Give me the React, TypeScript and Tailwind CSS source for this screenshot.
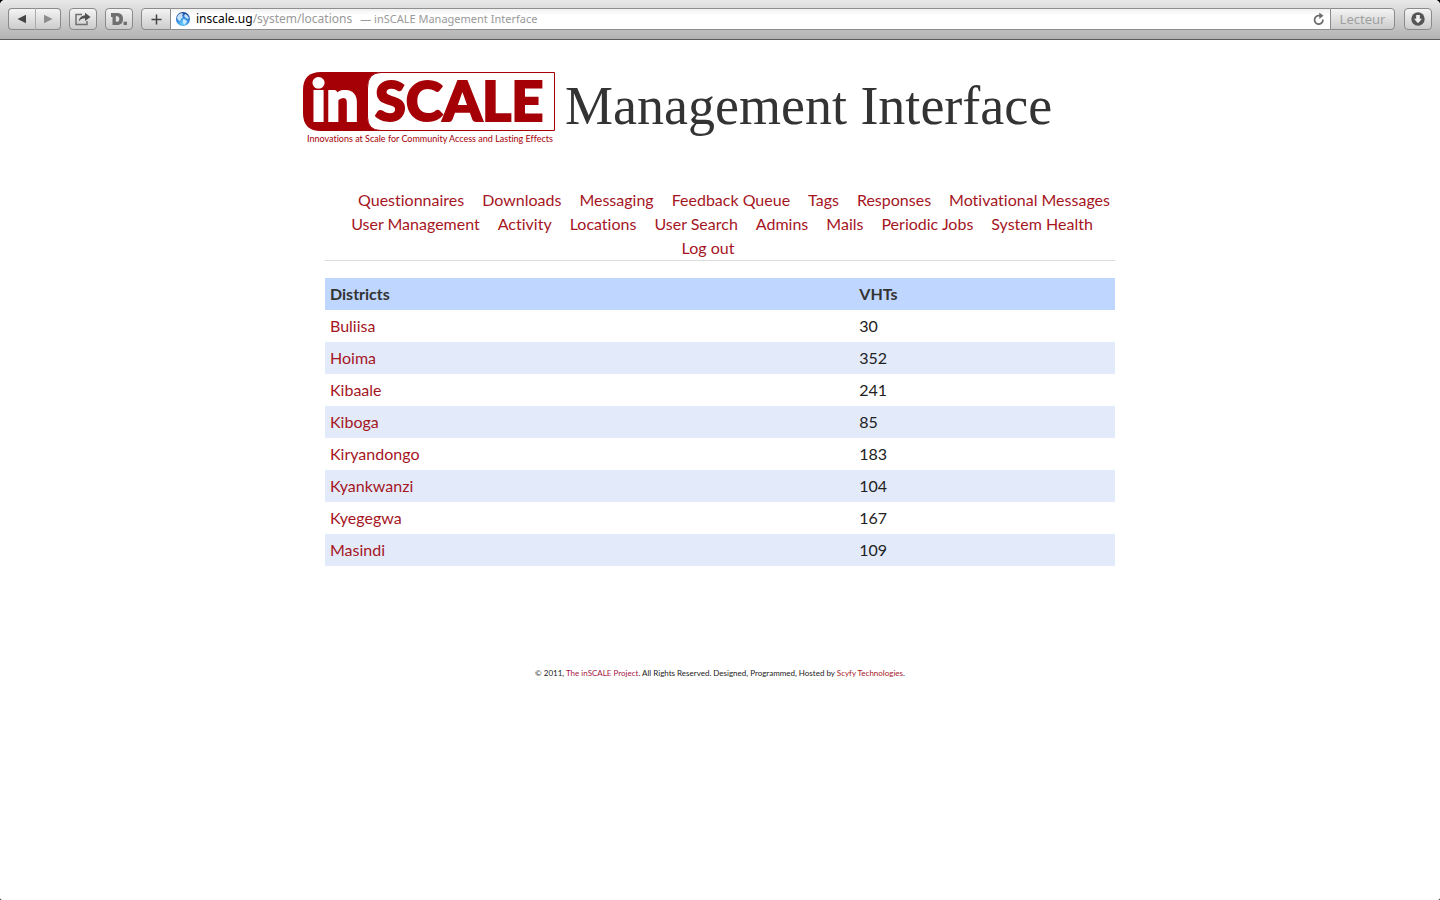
import React from "react";

const navRows = [
  { align: "pl-7", items: ["Questionnaires", "Downloads", "Messaging", "Feedback Queue", "Tags", "Responses", "Motivational Messages"] },
  { align: "pl-1", items: ["User Management", "Activity", "Locations", "User Search", "Admins", "Mails", "Periodic Jobs", "System Health"] },
  { align: "pr-6", items: ["Log out"] },
];

const districts = [
  { name: "Buliisa", vhts: 30 },
  { name: "Hoima", vhts: 352 },
  { name: "Kibaale", vhts: 241 },
  { name: "Kiboga", vhts: 85 },
  { name: "Kiryandongo", vhts: 183 },
  { name: "Kyankwanzi", vhts: 104 },
  { name: "Kyegegwa", vhts: 167 },
  { name: "Masindi", vhts: 109 },
];

const toolButton =
  "flex h-[22px] items-center justify-center border border-[#8a8a8a] bg-linear-to-b from-[#f4f4f4] to-[#cccccc]";

function Toolbar() {
  return (
    <div className="flex h-10 items-start border-b border-[#5c5c5c] bg-linear-to-b from-[#e9e9e9] to-[#b2b2b2] px-2 pt-2">
      <div className="mr-2 flex">
        <button aria-label="Back" className={`${toolButton} w-[27px] rounded-l-[4px] border-r-0`}>
          <svg width="10" height="10" viewBox="0 0 10 10"><path d="M9 .8v8.4L.5 5z" fill="#454545" /></svg>
        </button>
        <button aria-label="Forward" className={`${toolButton} w-[26px] rounded-r-[4px] border-l-[#aaaaaa]`}>
          <svg width="10" height="10" viewBox="0 0 10 10"><path d="M1 .8v8.4L9.500 5z" fill="#8c8c8c" /></svg>
        </button>
      </div>
      <button aria-label="Share" className={`${toolButton} mr-2 w-7 rounded-[4px]`}>
        <svg width="18" height="16" viewBox="0 0 18 16">
          <path d="M8 3.5H2v10h11V10" fill="none" stroke="#707070" strokeWidth="1.500" />
          <path d="M4.800 10.500C5 6.800 7.500 4.400 11 4.400V1.700l5.500 4.200-5.500 4V7.200C8.200 7.200 6.300 8.300 4.800 10.500z" fill="#505050" />
        </svg>
      </button>
      <button aria-label="Reading service" className={`${toolButton} mr-2 w-7 rounded-[4px]`}>
        <svg width="18" height="16" viewBox="0 0 18 16">
          <path fillRule="evenodd" d="M1 2h6c4 0 6 2.200 6 6s-2 6-6 6H2.500V6H1zM5.800 5.300v5.500H7c1.500 0 2.300-.9 2.300-2.800S8.500 5.300 7 5.300z" fill="#707070" />
          <rect x="13.500" y="10.700" width="3.500" height="3.300" fill="#707070" />
        </svg>
      </button>
      <button aria-label="Add bookmark" className={`${toolButton} w-[30px] rounded-l-[4px]`}>
        <svg width="11" height="11" viewBox="0 0 11 11"><path d="M5.500 .5v10M.5 5.500h10" stroke="#444444" strokeWidth="1.500" /></svg>
      </button>
      <div className="flex h-[22px] min-w-0 flex-1 items-center border-y border-[#8f8f8f] bg-linear-to-b from-[#f1f1f1] to-white to-30% pl-1 text-[12px] leading-5 text-[#999999]">
        <svg width="16" height="16" viewBox="0 0 16 16" className="mr-[5px] shrink-0">
          <defs>
            <radialGradient id="globe" cx="50%" cy="80%" r="80%">
              <stop offset="0" stopColor="#6fd4ff" />
              <stop offset=".6" stopColor="#2f7fd8" />
              <stop offset="1" stopColor="#163b91" />
            </radialGradient>
          </defs>
          <circle cx="8" cy="8" r="7" fill="url(#globe)" />
          <path d="M2.500 5l1.500-2 3-1 1 1-1 2 1 1-2 2-1 2-2-1L2 7zM10 3l2 1 2 3-1 1-2-1-2-2zM8 8l3 1 1 2-2 2-1 1-1-3z" fill="#dff3ff" opacity=".85" />
        </svg>
        <label htmlFor="address" className="text-black">inscale.ug</label>
        <input id="address" defaultValue="/system/locations" className="field-sizing-content outline-none" />
        <span className="ml-2 flex-1 truncate text-[11px]">— inSCALE Management Interface</span>
        <button aria-label="Reload" className="mr-[5px]">
          <svg width="13" height="14" viewBox="0 0 13 14">
            <path d="M8 3.700H6.500A4.200 4.200 0 1 0 10.900 7.500" fill="none" stroke="#6c6c6c" strokeWidth="1.700" />
            <path d="M7.300 .5L11.500 3.700 7.300 7z" fill="#6c6c6c" />
          </svg>
        </button>
      </div>
      <button className={`${toolButton} mr-[9px] w-[65px] rounded-r-[4px] text-[13px] text-[#a0a0a0]`}>Lecteur</button>
      <button aria-label="Downloads list" className={`${toolButton} w-7 rounded-[4px]`}>
        <svg width="14" height="14" viewBox="0 0 14 14">
          <circle cx="7" cy="7" r="6.700" fill="#555555" />
          <path d="M5.200 3h3.600v3.800H11L7 11.200 3 6.800h2.200z" fill="#f0f0f0" />
        </svg>
      </button>
    </div>
  );
}

function Logo() {
  return (
    <svg width="254" height="74" viewBox="0 0 254 74" role="img" aria-label="inSCALE" className="shrink-0 overflow-visible">
      <path d="M18 0H80V59H18Q0 59 0 41V18Q0 0 18 0z" fill="#a50006" />
      <path d="M78 .5H251.500V58.500H78Q64.500 58.500 64.500 45V16Q64.500 .5 78 .5z" fill="#ffffff" stroke="#a50006" />
      <g fontFamily="Lato, sans-serif" fontWeight="900">
        <text x="8" y="49" fontSize="58" fill="#ffffff" stroke="#ffffff" strokeWidth="2">in</text>
        <text x="72" y="49" fontSize="56" fill="#a50006" stroke="#a50006" strokeWidth="2">SCALE</text>
      </g>
      <text x="4" y="70" fontFamily="Lato, sans-serif" fontSize="9" fill="#a50006">
        Innovations at Scale for Community Access and Lasting Effects
      </text>
    </svg>
  );
}

export default function App() {
  return (
    <div className="min-h-screen bg-black">
      <div className="min-h-screen overflow-hidden rounded-t-[5px] rounded-b-[2px] bg-white font-['Lato',sans-serif] text-[16px] leading-6 text-[#222222] [font-variant-ligatures:none]">
        <div className="font-['Noto_Sans',sans-serif]">
          <Toolbar />
        </div>
        <header className="mx-auto flex h-[148px] max-w-[834px] items-start pt-8">
          <Logo />
          <h1 className="ml-2 font-['Liberation_Serif',serif] text-[54px] leading-[68px] whitespace-nowrap text-[#333333]">
            Management Interface
          </h1>
        </header>
        <div className="mx-auto max-w-[790px]">
          <nav className="border-b border-[#dddddd]">
            {navRows.map((row) => (
              <ul key={row.items[0]} className={`flex flex-wrap justify-center gap-x-[18px] ${row.align}`}>
                {row.items.map((item) => (
                  <li key={item}>
                    <a href="#" className="whitespace-nowrap text-[#a5161f]">{item}</a>
                  </li>
                ))}
              </ul>
            ))}
          </nav>
          <table className="mt-[17px] w-full table-fixed border-collapse text-left">
            <thead>
              <tr className="bg-[#bfd7ff]">
                <th className="w-[67%] px-[5px] py-1 font-bold text-[#333333]">Districts</th>
                <th className="px-[5px] py-1 font-bold text-[#333333]">VHTs</th>
              </tr>
            </thead>
            <tbody>
              {districts.map((d) => (
                <tr key={d.name} className="even:bg-[#e3ebfb]">
                  <td className="px-[5px] py-1">
                    <a href="#" className="text-[#a5161f]">{d.name}</a>
                  </td>
                  <td className="px-[5px] py-1">{d.vhts}</td>
                </tr>
              ))}
            </tbody>
          </table>
          <footer className="mt-[101px] text-center text-[8px] leading-3">
            © 2011, <a href="#" className="text-[#a5163f]">The inSCALE Project</a>. All Rights Reserved. Designed, Programmed, Hosted by{" "}
            <a href="#" className="text-[#a5161f]">Scyfy Technologies</a>.
          </footer>
        </div>
      </div>
    </div>
  );
}
